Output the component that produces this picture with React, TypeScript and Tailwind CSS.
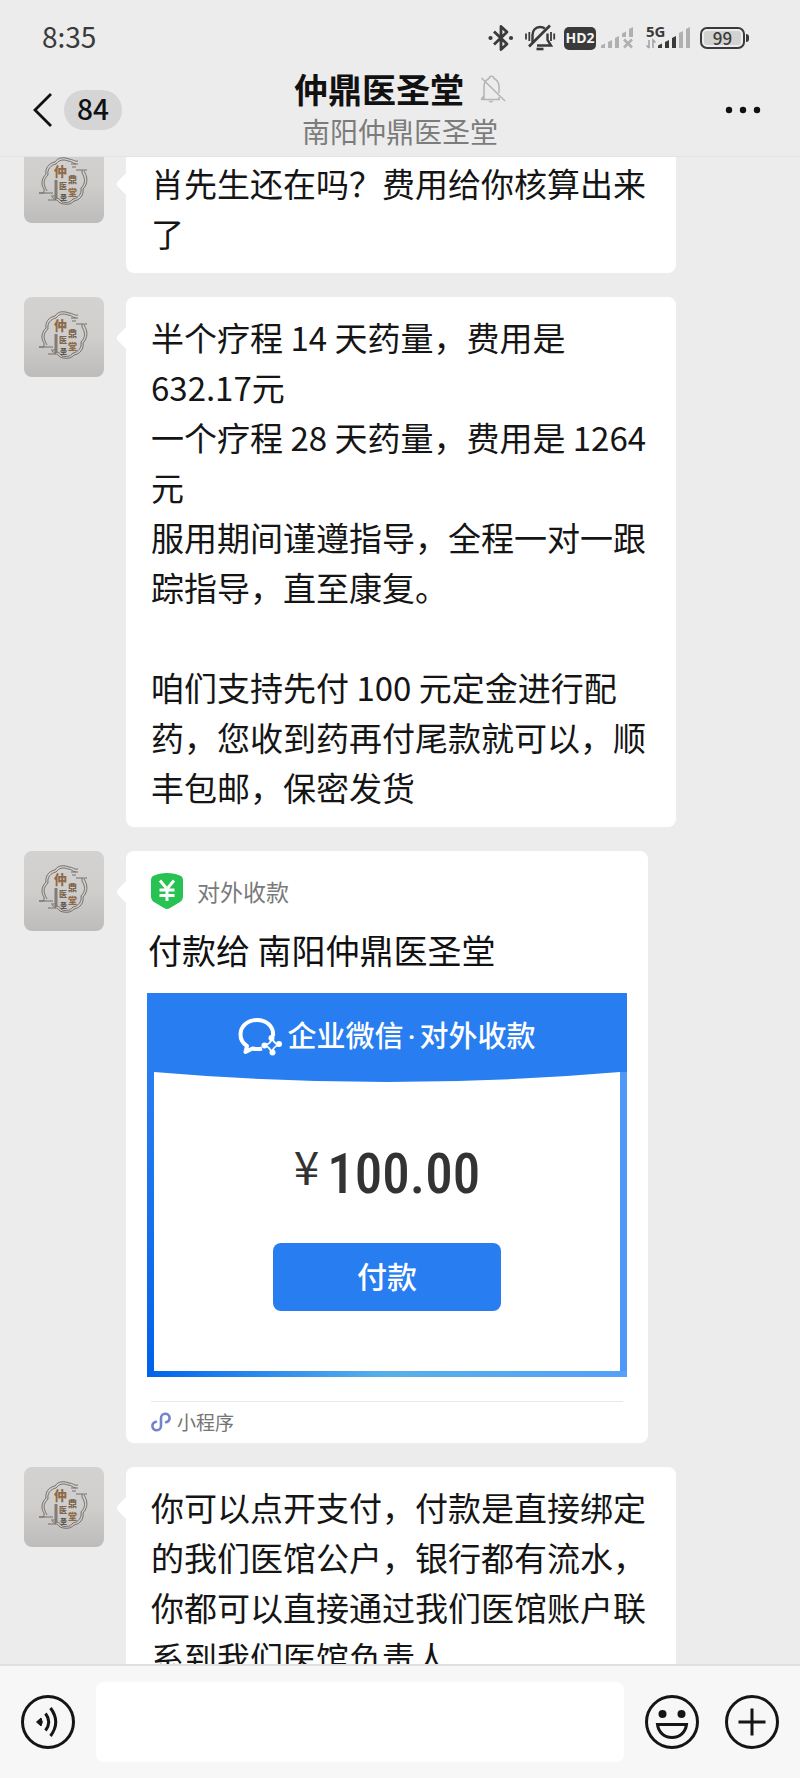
import { useState } from "react";
import type { ReactNode } from "react";

const messages = {
  reminder: "肖先生还在吗？费用给你核算出来了",
  prices: `半个疗程 14 天药量，费用是632.17元
一个疗程 28 天药量，费用是 1264元
服用期间谨遵指导，全程一对一跟踪指导，直至康复。

咱们支持先付 100 元定金进行配药，您收到药再付尾款就可以，顺丰包邮，保密发货`,
  account: "你可以点开支付，付款是直接绑定的我们医馆公户，银行都有流水，你都可以直接通过我们医馆账户联系到我们医馆负责人",
};

const StatusBar = () => (
  <div className="flex h-[68px] items-center justify-between pt-2 pl-[42px] pr-[51px] text-[#3a3a3a]">
    <span className="pb-1 text-[28px] leading-8">8:35</span>
    <div className="flex items-center">
      {/* Bluetooth */}
      <svg width="28" height="28" viewBox="0 0 28 28" fill="none" stroke="#3a3a3a" strokeWidth="2.8">
        <path d="M6 7.5 L19 20 L13 25.5 V2.5 L19 8 L6 20.5" strokeLinejoin="round" />
        <circle cx="2.5" cy="14" r="2.1" fill="#3a3a3a" stroke="none" />
        <circle cx="23" cy="14" r="2.1" fill="#3a3a3a" stroke="none" />
      </svg>
      {/* Ringer off */}
      <svg className="ml-2" width="32" height="28" viewBox="0 0 32 28" fill="none" stroke="#3a3a3a" strokeWidth="2.4">
        <path d="M8.5 18 V11 C8.5 6.5 11.5 3 16 3 C18 3 19.6 3.5 20.8 4.5" />
        <path d="M23.5 9.5 V16 L27 21.5 H13" />
        <path d="M26 1.5 L5 22.5" strokeWidth="2.6" />
        <path d="M12.5 25 H19.5" strokeWidth="2.6" />
        <path d="M2 9.5 V15.5 M5.3 8 V17 M27 8 V17 M30.2 9.5 V15.5" strokeWidth="1.8" />
      </svg>
      <span className="ml-2 flex h-[23px] w-8 items-center justify-center rounded-[5px] bg-[#3a3a3a] font-['Open_Sans'] text-[14px] font-bold leading-none text-[#f4f4f4]">
        HD2
      </span>
      {/* First SIM, no signal */}
      <svg className="ml-1" width="34" height="24" viewBox="0 0 34 24" fill="#b0b0b0">
        <path d="M1 22 V19.5 L5 17.5 V22 Z M8 22 V16 L12 14 V22 Z M15 22 V12 L19 10 V22 Z M22 11 V7.5 L26 5.5 V11 Z M29 11 V3 L33 1 V11 Z" />
        <path d="M24 13.5 L32 21.5 M32 13.5 L24 21.5" stroke="#b0b0b0" strokeWidth="2.6" />
      </svg>
      {/* Second SIM */}
      <svg className="ml-3" width="46" height="34" viewBox="0 -4 46 34" fill="#3a3a3a">
        <text x="0" y="12" fontSize="15" fontWeight="700" fontFamily="Open Sans, sans-serif">5G</text>
        <path d="M3 15 V23 M3 23 L0.5 20.5 M7 23 V15 L9.5 17.5" stroke="#a0a0a0" strokeWidth="1.5" fill="none" />
        <path d="M12 23 V20.5 L16 18.5 V23 Z M19 23 V17 L23 15 V23 Z M26 23 V13 L30 11 V23 Z" />
        <path d="M33 23 V8 L37 6 V23 Z M40 23 V4 L44 2 V23 Z" fill="#b0b0b0" />
      </svg>
      <div className="ml-2 flex items-center">
        <span className="flex h-[22px] w-[45px] rounded-[7px] border-2 border-[#3a3a3a] p-0.5">
          <span className="flex w-full items-center justify-center rounded-[3px] bg-[#d2d2d2] pb-0.5 text-[17px] font-medium leading-none">
            99
          </span>
        </span>
        <span className="ml-px h-2 w-[3px] rounded-r-sm bg-[#3a3a3a]" />
      </div>
    </div>
  </div>
);

const ChatHeader = () => (
  <header className="shrink-0 border-b border-[#e4e4e4] bg-[#ececec] pb-2">
    <StatusBar />
    <div className="grid h-20 grid-cols-[1fr_auto_1fr] items-center px-8">
      <button type="button" aria-label="返回" className="flex items-center gap-3 justify-self-start">
        <svg width="20" height="36" viewBox="0 0 20 36" fill="none" stroke="#111" strokeWidth="2.8">
          <path d="M19 2 L3 18 L19 34" />
        </svg>
        <span className="rounded-full bg-[#d5d5d5] px-[13px] pb-1 text-[28px] font-medium leading-9 text-[#111]">84</span>
      </button>
      <div className="flex flex-col items-center leading-[42px]">
        <div className="flex items-center gap-4">
          <h1 className="text-[34px] font-bold text-[#111]">仲鼎医圣堂</h1>
          <svg width="26" height="28" viewBox="0 0 26 28" fill="none" stroke="#b4b4b4" strokeWidth="1.5">
            <path d="M1 24.5 H20 M4 24 V12 C4 7 6.5 4.5 9 3.5 C9.5 0.5 13.5 0.5 14 3.5 C17.5 5 19 8 19 12 V18 M19 22 V24.5 M1 24.5 L4 21" />
            <path d="M9 26 Q11 27.5 13 26 M1.5 3 L25 26" />
          </svg>
        </div>
        <p className="text-[28px] text-[#7c7c7c]">南阳仲鼎医圣堂</p>
      </div>
      <button type="button" aria-label="更多" className="mr-[7px] justify-self-end">
        <svg width="36" height="8" viewBox="0 0 36 8" fill="#111">
          <circle cx="4" cy="4" r="3.2" />
          <circle cx="18" cy="4" r="3.2" />
          <circle cx="32" cy="4" r="3.2" />
        </svg>
      </button>
    </div>
  </header>
);

const Avatar = () => (
  <div className="size-20 shrink-0 overflow-hidden rounded-lg bg-linear-to-b from-[#d3d2d1] via-[#cfcecd] to-[#bdbcbb]">
    <svg viewBox="0 0 80 80" fill="none" stroke="#77706a" strokeWidth="1">
      <path d="M54 18 C50 19 49 16 45 16 C40 14 34 14 31 19 C25 20 21 25 22 31 C17 36 17 42 20 46 V50 H15 M28 54 C31 57 34 57 36 60 C41 62 47 62 50 58 C56 57 60 52 59 46 C64 41 64 34 60 28" />
      <path d="M52 21 C49 21 48 18 44 18 C39 16 35 17 32 21 C27 22 23 26 24 32 C19 37 19 41 23 48 M31 54 C34 55 36 56 38 59 C42 60 46 60 49 56 C54 55 58 51 57 45 C62 40 61 35 58 30 V27" />
      <path d="M47 21 H54 M48 24 H52 M52 27 H63 M15 50 H29 M27 53 H31 M24 57 H32" />
      <path d="M32 37 V56" strokeWidth="3" stroke="#807c78" />
      <g fill="#8f6a45" stroke="none" fontWeight="900" fontFamily="Noto Sans CJK SC, sans-serif">
        <text x="30" y="33" fontSize="13">仲</text>
        <text x="44" y="40" fontSize="9" fill="#7d6650">鼎</text>
        <text x="35" y="46" fontSize="8" fill="#7d6650">医</text>
        <text x="44" y="53" fontSize="9">堂</text>
        <text x="36" y="57" fontSize="7" fill="#5c5854">圣</text>
      </g>
    </svg>
  </div>
);

const Message = ({ children, className }: { children: ReactNode; className: string }) => (
  <li className="flex items-start gap-[22px] pl-6">
    <Avatar />
    <div className={`relative min-w-0 flex-1 rounded-lg bg-white ${className}`}>
      {/* Bubble tail */}
      <span className="absolute -left-[7px] top-8 size-[18px] rotate-45 rounded-sm bg-white" />
      {children}
    </div>
  </li>
);

const TextMessage = ({ text }: { text: string }) => (
  <Message className="mr-[124px] px-[25px] py-[15px]">
    <p className="whitespace-pre-line text-[33px] leading-[50px] text-[#151515]">{text}</p>
  </Message>
);

const PaymentCard = () => (
  <div className="mx-[21px] bg-linear-to-r from-[#0062ea] via-[#58b0e8] to-[#55a0f8] pb-1.5">
    <div className="flex h-[79px] items-center justify-center gap-[5px] bg-[#287ef0] pt-2">
      <svg width="44" height="40" viewBox="0 0 44 40" fill="none" stroke="#fff">
        <path d="M35 19 C36 9 28 3 19 3 C10 3 2.5 9 2.5 17.5 C2.5 22.5 5 26.5 9 29 L7.5 35 L14.5 31.5 C18 32.3 21 32.3 24 31.5" strokeWidth="4" strokeLinejoin="round" />
        <path d="M34 22 C32 26 31 27 27 28 C31 30 32 31 34 35 C35 31 37 29 41 28 C37 27 36 25 34 22 Z" strokeWidth="1.8" />
        <g fill="#fff" stroke="none">
          <circle cx="33.5" cy="21" r="3" />
          <circle cx="26.5" cy="28.5" r="3" />
          <circle cx="34.5" cy="35.5" r="3" />
          <circle cx="41" cy="27" r="3" />
        </g>
      </svg>
      <span className="font-['Roboto','Noto_Sans_CJK_SC',sans-serif] text-[29px] font-medium leading-10 text-white">
        企业微信<span className="mx-1">·</span>对外收款
      </span>
    </div>
    <div className="bg-linear-to-b from-[#287ef0] to-[#0062ea]">
      <div className="bg-[linear-gradient(to_right,transparent_50%,#4f98f8_50%)] px-[7px]">
        <div className="flex flex-col items-center bg-white">
          <svg className="w-full" height="10" viewBox="0 0 466 10" preserveAspectRatio="none" fill="#287ef0">
            <path d="M0 0 Q233 20 466 0 Z" />
          </svg>
          <p className="mt-[58px] flex items-start gap-2 text-[#333]">
            <span className="text-[46px] leading-[50px]">¥</span>
            <span className="font-['Roboto_Condensed','Noto_Sans_CJK_SC',sans-serif] text-[55px] font-medium leading-[68px]">
              100.00
            </span>
          </p>
          <button type="button" className="mt-[35px] mb-[60px] h-[68px] w-[228px] rounded-lg bg-[#287ef0] pb-1 text-[30px] font-medium text-white">
            付款
          </button>
        </div>
      </div>
    </div>
  </div>
);

const PaymentMessage = () => (
  <Message className="mr-[152px]">
    <div className="flex items-center gap-[13px] pt-[21px] pl-6">
      <svg width="34" height="38" viewBox="0 0 34 38" fill="none">
        <path d="M17 1 C22 1 27 2 31 4 Q33 5 33 8 V24 Q33 28 30 30 L20 36 Q17 38 14 36 L4 30 Q1 28 1 24 V8 Q1 5 3 4 C7 2 12 1 17 1 Z" fill="#27c251" />
        <path d="M10 8.5 L17 17 L24 8.5 M17 17 V29 M9.5 18 H24.5 M9.5 23.5 H24.5" stroke="#fff" strokeWidth="3" />
      </svg>
      <span className="text-[23px] leading-9 text-[#7a7a7a]">对外收款</span>
    </div>
    <h2 className="mt-[15px] mb-[18px] pl-[22px] text-[34px] leading-[50px] text-[#111]">付款给 南阳仲鼎医圣堂</h2>
    <PaymentCard />
    <div className="mx-[25px] mt-6 flex h-[42px] items-center gap-1.5 border-t border-[#e8e8e8] pb-0.5">
      <svg width="20" height="20" viewBox="0 0 20 20" fill="none" stroke="#7482cc" strokeWidth="2.6" strokeLinecap="round">
        <path d="M15 10.3 A4.3 4.3 0 1 0 10 6 V14 A4.3 4.3 0 1 1 5 9.7" />
      </svg>
      <span className="text-[19px] leading-7 text-[#757575]">小程序</span>
    </div>
  </Message>
);

const RoundButton = ({ label, children }: { label: string; children: ReactNode }) => (
  <button type="button" aria-label={label} className="shrink-0">
    <svg width="54" height="54" viewBox="0 0 54 54" fill="none" stroke="#151515" strokeWidth="3">
      <circle cx="27" cy="27" r="25.5" />
      {children}
    </svg>
  </button>
);

const InputBar = () => {
  const [draft, setDraft] = useState("");

  return (
    <footer className="flex shrink-0 items-center gap-[21px] border-t-2 border-[#dfdfdf] bg-[#f7f7f7] px-[21px] py-4">
      <RoundButton label="语音">
        <path d="M15.5 27 L20 23 Q22.5 27 20 31 Z" fill="#151515" strokeWidth="1" />
        <path d="M24.5 18.5 Q31 27 24.5 35.5 M29.5 13 Q40 27 29.5 41" />
      </RoundButton>
      <input
        type="text"
        aria-label="消息"
        value={draft}
        onChange={(e) => setDraft(e.target.value)}
        className="h-20 min-w-0 flex-1 rounded-lg bg-white px-5 text-[33px] text-[#151515] outline-none"
      />
      <div className="flex gap-[26px]">
        <RoundButton label="表情">
          <circle cx="17.5" cy="19" r="4" fill="#151515" stroke="none" />
          <circle cx="36.5" cy="19" r="4" fill="#151515" stroke="none" />
          <path d="M12.5 29.5 H41.5 C40.5 37 35 42.5 27 42.5 C19 42.5 13.5 37 12.5 29.5 Z" />
        </RoundButton>
        <RoundButton label="更多功能">
          <path d="M27 13.5 V40.5 M13.5 27 H40.5" />
        </RoundButton>
      </div>
    </footer>
  );
};

const App = () => {
  return (
    <div className="flex h-screen flex-col bg-[#ececec] font-['Noto_Sans_CJK_SC',sans-serif]" lang="zh-CN">
      <ChatHeader />
      <main className="min-h-0 flex-1 overflow-hidden">
        {/* Scrolled a little past the top of the first message */}
        <ul className="-mt-3.5 flex flex-col gap-6">
          <TextMessage text={messages.reminder} />
          <TextMessage text={messages.prices} />
          <PaymentMessage />
          <TextMessage text={messages.account} />
        </ul>
      </main>
      <InputBar />
    </div>
  );
};

export default App;
